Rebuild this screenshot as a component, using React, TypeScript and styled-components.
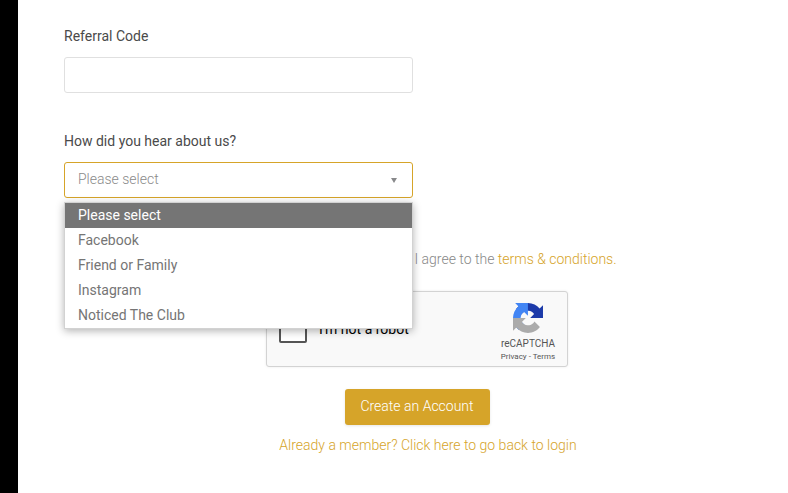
import React from "react";
import styled, { createGlobalStyle } from "styled-components";

const Global = createGlobalStyle`
  html, body { margin: 0; padding: 0; background: #fff; overflow: hidden; }
  * { box-sizing: border-box; }
`;

const Page = styled.div`
  display: flex;
  width: 788px;
  height: 493px;
  overflow: hidden;
  font-family: Roboto, "Liberation Sans", sans-serif;
  font-size: 14px;
  color: #444;
`;

const Strip = styled.div`
  flex: 0 0 18px;
  background: #000;
`;

const Main = styled.main`
  flex: 1;
  padding: 27px 0 0 46px;
`;

const Field = styled.div`
  width: 349px;
  margin-bottom: 39px;
  position: relative;
`;

const Label = styled.label`
  display: block;
  height: 18px;
  line-height: 18px;
  margin-bottom: 12px;
  color: #4a4a4a;
`;

const TextInput = styled.input`
  display: block;
  width: 100%;
  height: 36px;
  border: 1px solid #e0e0e0;
  border-radius: 3px;
  background: #fff;
  outline: none;
`;

const SelectBox = styled.div`
  display: flex;
  align-items: center;
  justify-content: space-between;
  height: 36px;
  padding: 0 15px 2px 13px;
  border: 1px solid #d6a429;
  border-radius: 3px;
  color: #8a8a8a;
  font-weight: 300;
`;

const Caret = styled.span`
  width: 0;
  height: 0;
  margin-top: 2px;
  border-left: 3.5px solid transparent;
  border-right: 3.5px solid transparent;
  border-top: 5px solid #88898b;
`;

const Menu = styled.ul`
  position: absolute;
  z-index: 5;
  top: 70px;
  left: 0;
  right: 0;
  margin: 0;
  padding: 0;
  list-style: none;
  background: #fff;
  border: 1px solid #d2d2d2;
  box-shadow: 0 2px 8px rgba(0, 0, 0, 0.3);
`;

const Option = styled.li<{ $active?: boolean }>`
  height: 25px;
  line-height: 25px;
  padding-left: 13px;
  background: ${(p) => (p.$active ? "#757575" : "#fff")};
  color: ${(p) => (p.$active ? "#fff" : "#757575")};
`;

const Center = styled.div`
  width: 728px;
  display: flex;
  flex-direction: column;
  align-items: center;
`;

const Terms = styled.div`
  height: 18px;
  line-height: 18px;
  padding-left: 175px;
  margin-top: 13px;
  color: #888;
  font-weight: 300;
  white-space: nowrap;
`;

const Link = styled.a`
  color: #d6a429;
  font-weight: 300;
  text-decoration: none;
`;

const Captcha = styled.div`
  display: flex;
  align-items: center;
  width: 302px;
  height: 76px;
  margin: 23px 22px 0 0;
  padding: 0 11px 0 12px;
  background: #f9f9f9;
  border: 1px solid #d3d3d3;
  border-radius: 3px;
  box-shadow: 0 0 3px rgba(0, 0, 0, 0.08);
`;

const Check = styled.span`
  width: 28px;
  height: 28px;
  flex: none;
  background: #fff;
  border: 2px solid #555;
  border-radius: 2px;
`;

const CaptchaLabel = styled.span`
  flex: 1;
  margin-left: 12px;
  color: #000;
  font-size: 14px;
`;

const Brand = styled.div`
  width: 56px;
  display: flex;
  flex-direction: column;
  align-items: center;
  padding-top: 8px;
`;

const BrandName = styled.div`
  margin-top: 5px;
  font-size: 10px;
  line-height: 12px;
  color: #555;
`;

const BrandLinks = styled.div`
  font-size: 8px;
  line-height: 12px;
  margin-top: 1px;
  color: #555;
  white-space: nowrap;
`;

const Submit = styled.button`
  width: 145px;
  height: 36px;
  margin: 22px 22px 0 0;
  padding: 0 0 2px 0;
  border: 0;
  border-radius: 3px;
  background: #d6a429;
  color: #fff;
  font: 300 14px Roboto, "Liberation Sans", sans-serif;
  box-shadow: 0 1px 3px rgba(0, 0, 0, 0.1);
`;

const Back = styled(Link)`
  display: block;
  margin-top: 11px;
  line-height: 18px;
`;

export default function App() {
  return (
    <Page>
      <Global />
      <Strip />
      <Main>
        <Field>
          <Label>Referral Code</Label>
          <TextInput />
        </Field>
        <Field>
          <Label>How did you hear about us?</Label>
          <SelectBox>
            Please select
            <Caret />
          </SelectBox>
          <Menu>
            <Option $active>Please select</Option>
            <Option>Facebook</Option>
            <Option>Friend or Family</Option>
            <Option>Instagram</Option>
            <Option>Noticed The Club</Option>
          </Menu>
        </Field>
        <Center>
          <Terms>
            I agree to the <Link>terms &amp; conditions.</Link>
          </Terms>
          <Captcha>
            <Check />
            <CaptchaLabel>I'm not a robot</CaptchaLabel>
            <Brand>
              <svg width="30" height="30" viewBox="0 0 64 64">
                <path fill="#1c3aa9" d="M64 31.955l-.033-1.37V4.687l-7.16 7.16C50.948 4.674 42.033.093 32.05.093c-10.4 0-19.622 4.96-25.458 12.64l11.736 11.86a15.55 15.55 0 0 1 4.754-5.334c2.05-1.6 4.952-2.906 8.968-2.906.485 0 .86.057 1.135.163 4.976.393 9.288 3.14 11.828 7.124l-8.307 8.307 28.3-.001" />
                <path fill="#4285f4" d="M31.862.094l-1.37.033H4.594l7.16 7.16C4.58 13.147 0 22.06 0 32.046c0 10.4 4.96 19.622 12.64 25.458l11.86-11.736a15.55 15.55 0 0 1-5.334-4.754c-1.6-2.05-2.906-4.952-2.906-8.968 0-.485.057-.86.163-1.135.393-4.976 3.14-9.288 7.124-11.828l8.307 8.307-.001-28.3" />
                <path fill="#ababab" d="M.001 32.045l.033 1.37v25.898l7.16-7.16c5.86 7.173 14.774 11.754 24.76 11.754 10.4 0 19.622-4.96 25.458-12.64l-11.736-11.86a15.55 15.55 0 0 1-4.754 5.334c-2.05 1.6-4.952 2.906-8.968 2.906-.485 0-.86-.057-1.135-.163-4.976-.393-9.288-3.14-11.828-7.124l8.307-8.307-28.3.001" />
              </svg>
              <BrandName>reCAPTCHA</BrandName>
              <BrandLinks>Privacy - Terms</BrandLinks>
            </Brand>
          </Captcha>
          <Submit>Create an Account</Submit>
          <Back>Already a member? Click here to go back to login</Back>
        </Center>
      </Main>
    </Page>
  );
}
